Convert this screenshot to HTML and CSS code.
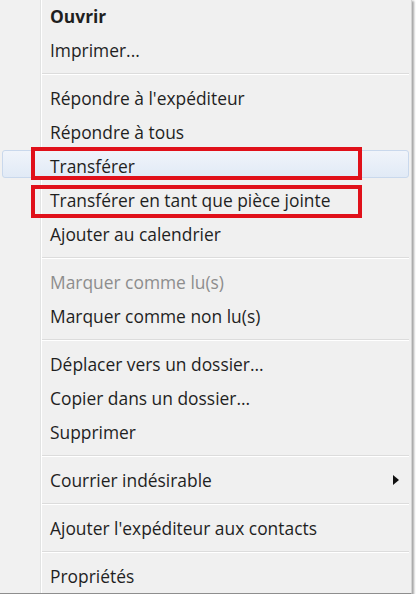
FILE: index.html
```html
<!DOCTYPE html>
<html lang="fr">
<head>
<meta charset="utf-8">
<title>Menu contextuel</title>
<link rel="stylesheet" href="styles.css">
</head>
<body>
<div class="menu">
  <div class="item bold"><span class="label">Ouvrir</span></div>
  <div class="item"><span class="label">Imprimer...</span></div>
  <div class="sep"></div>
  <div class="item"><span class="label">Répondre à l'expéditeur</span></div>
  <div class="item"><span class="label">Répondre à tous</span></div>
  <div class="item hover marked marked-a"><span class="label">Transférer</span></div>
  <div class="item marked marked-b"><span class="label">Transférer en tant que pièce jointe</span></div>
  <div class="item"><span class="label">Ajouter au calendrier</span></div>
  <div class="sep"></div>
  <div class="item disabled"><span class="label">Marquer comme lu(s)</span></div>
  <div class="item"><span class="label">Marquer comme non lu(s)</span></div>
  <div class="sep"></div>
  <div class="item"><span class="label">Déplacer vers un dossier...</span></div>
  <div class="item"><span class="label">Copier dans un dossier...</span></div>
  <div class="item"><span class="label">Supprimer</span></div>
  <div class="sep"></div>
  <div class="item"><span class="label">Courrier indésirable</span><span class="arrow"></span></div>
  <div class="sep"></div>
  <div class="item"><span class="label">Ajouter l'expéditeur aux contacts</span></div>
  <div class="sep"></div>
  <div class="item"><span class="label">Propriétés</span></div>
</div>
</body>
</html>
```

FILE: styles.css
```css
html, body {
  margin: 0;
  padding: 0;
  background: #ffffff;
}

body {
  font-family: "Open Sans", "Noto Sans", "DejaVu Sans", sans-serif;
  font-size: 17.4px;
  color: #1f1f1f;
}

.menu {
  width: 411px;
  margin-top: -1px;
  display: flex;
  flex-direction: column;
  background: linear-gradient(to right, #f1f1f1 0, #f1f1f1 40px, #e2e3e3 40px, #e2e3e3 41px, #ffffff 41px, #ffffff 42px, #f0f0f0 42px);
  border-right: 1px solid #d4d4d4;
  border-bottom: 1px solid #8e8e8e;
  box-shadow: 2px 2px 2px rgba(0, 0, 0, 0.35);
}

.item {
  position: relative;
  height: 34px;
  display: flex;
  align-items: center;
  padding: 0 12px 0 50px;
  white-space: nowrap;
}

.label {
  position: relative;
  z-index: 1;
}

.item.bold {
  font-weight: 700;
}

.item.disabled {
  color: #8d8d8d;
}

.sep {
  height: 14px;
  margin-left: 42px;
  margin-right: 2px;
  background: linear-gradient(to bottom, transparent 6px, #dcdcdc 6px, #dcdcdc 7px, #ffffff 7px, #ffffff 8px, transparent 8px);
}

.item.hover::before {
  content: "";
  position: absolute;
  left: 2px;
  right: 2px;
  top: 1px;
  height: 26px;
  border: 1px solid #c9d8ec;
  border-radius: 3px;
  background: linear-gradient(to bottom, #f0f4fa, #e1eaf6);
  z-index: 0;
}

.item.marked::after {
  content: "";
  position: absolute;
  left: 31px;
  width: 323px;
  height: 25px;
  border: 4px solid #e0101a;
  z-index: 2;
}

.item.marked-a::after {
  top: -2px;
}

.item.marked-b::after {
  top: 2px;
}

.arrow {
  position: relative;
  z-index: 1;
  margin-left: auto;
  width: 0;
  height: 0;
  border-top: 5px solid transparent;
  border-bottom: 5px solid transparent;
  border-left: 6px solid #111;
}
```
